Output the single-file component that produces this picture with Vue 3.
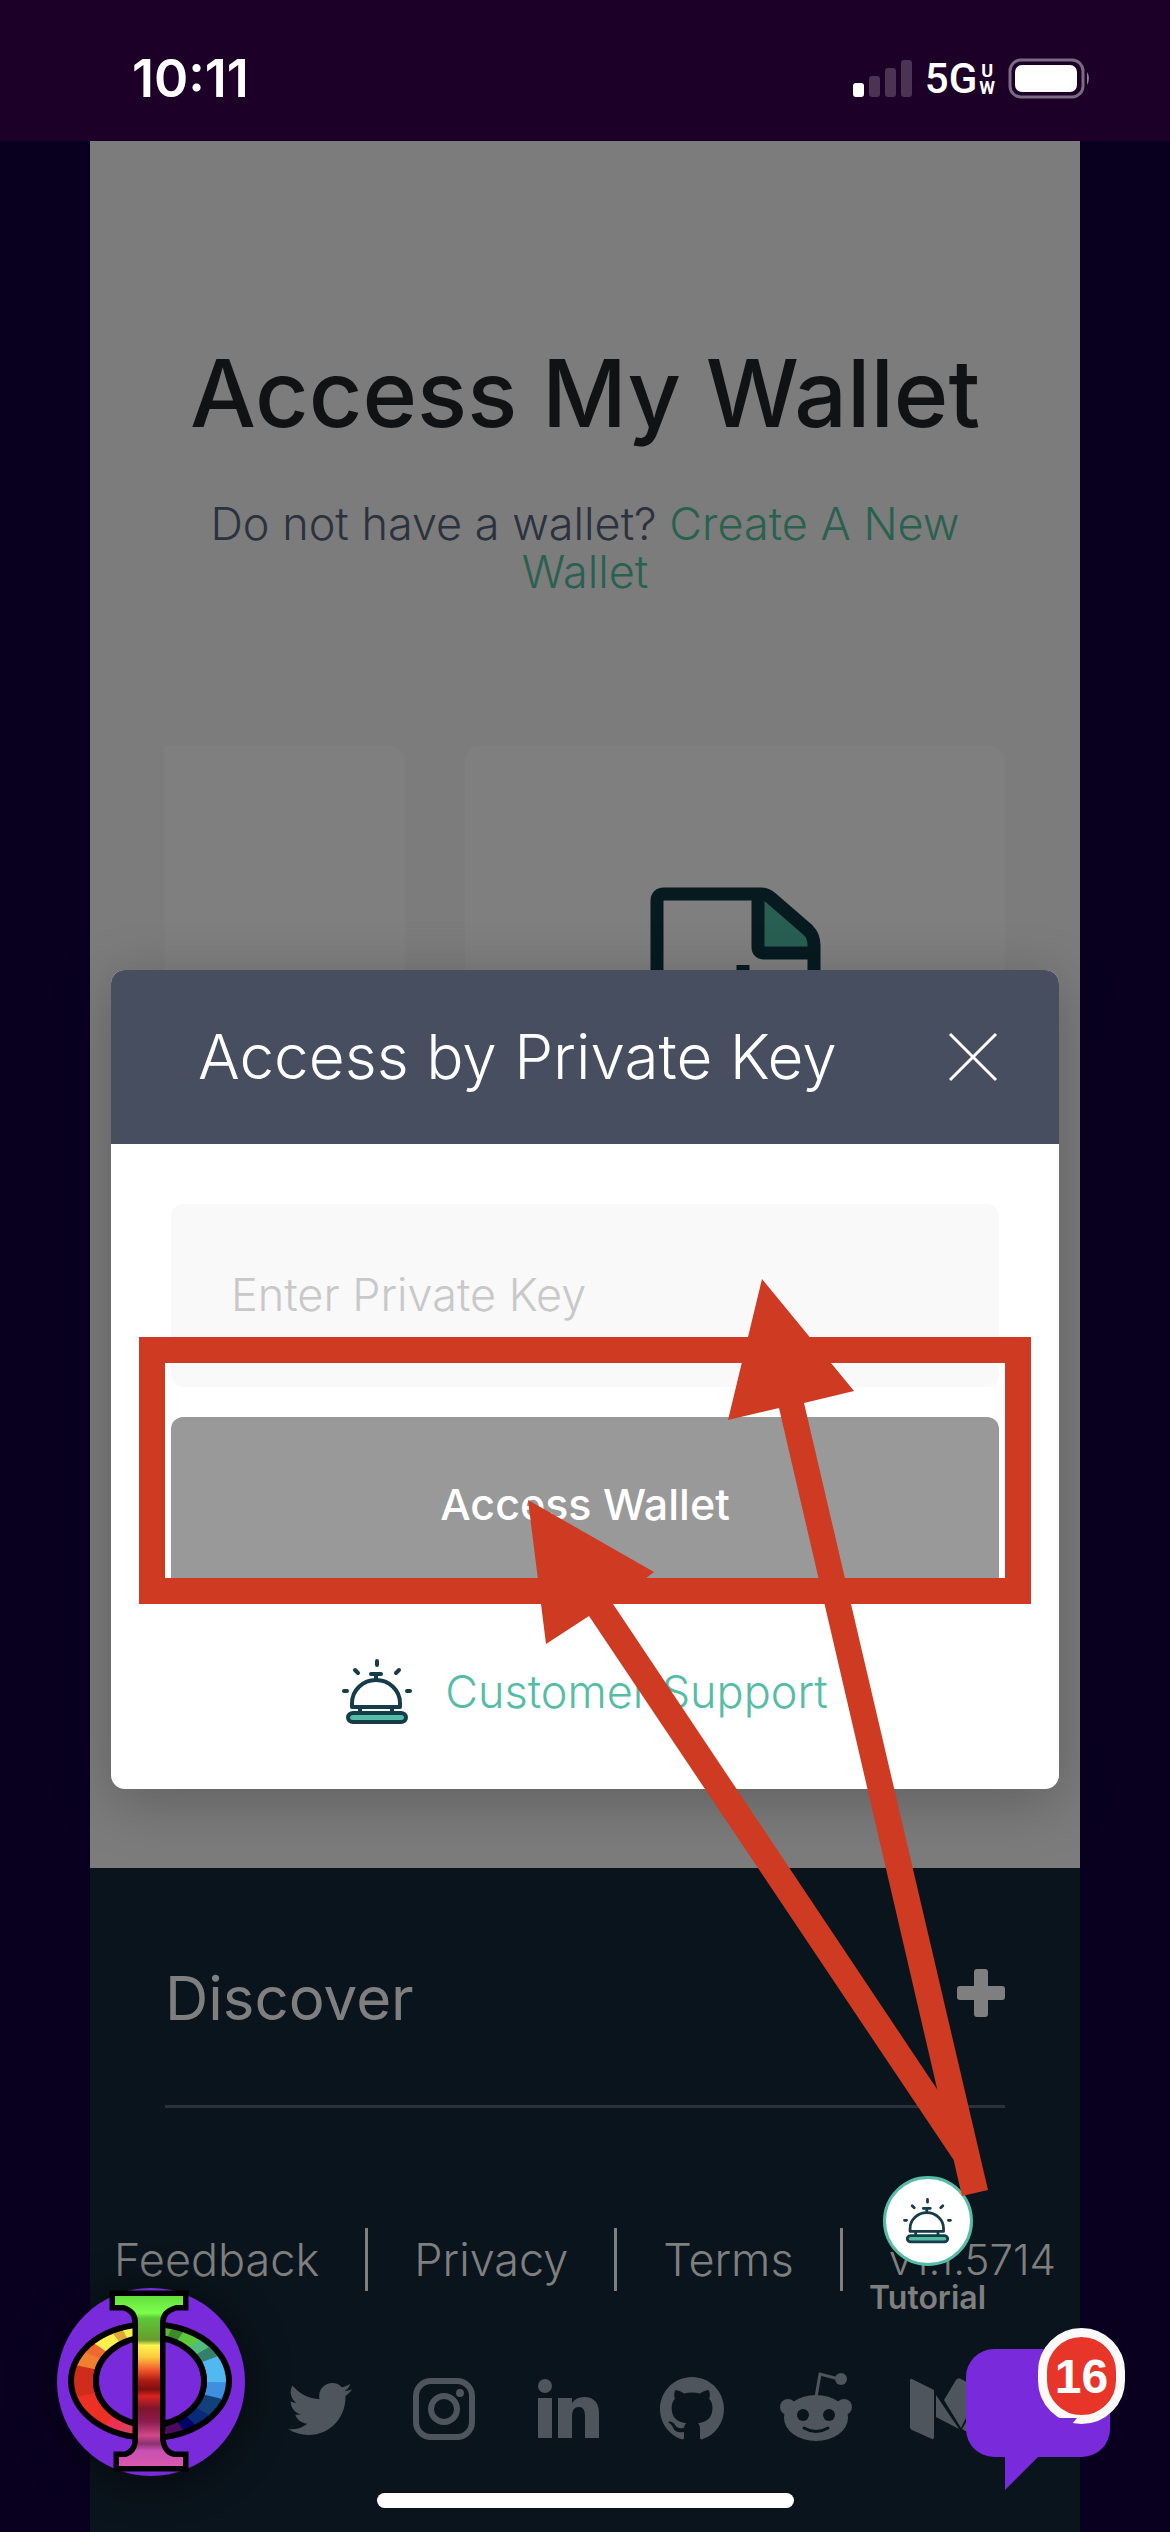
<script setup>
import { ref } from 'vue'

const privateKey = ref('')
const links = ['Feedback', 'Privacy', 'Terms']

const wedgeColors = [
  [0, 14, '#3f8fe0'], [14, 30, '#12407a'], [30, 44, '#082a78'], [44, 56, '#040468'],
  [56, 72, '#4a0a5e'], [72, 90, '#7a2070'], [90, 106, '#f050a0'], [106, 122, '#d8405c'],
  [122, 136, '#ee3050'], [136, 168, '#ec3024'], [168, 192, '#cf2c1c'], [192, 204, '#f08030'],
  [204, 214, '#f06a30'], [214, 232, '#fff050'], [232, 242, '#e0a83a'], [242, 270, '#f8f04c'],
  [270, 292, '#58b832'], [292, 304, '#3f8a2c'], [304, 320, '#5cc83c'], [320, 330, '#50bc80'],
  [330, 340, '#35806c'], [340, 360, '#52b8f0'],
]
const point = (deg) => {
  const a = (deg * Math.PI) / 180
  return `${(94 + 110 * Math.cos(a)).toFixed(1)} ${(94 + 110 * Math.sin(a)).toFixed(1)}`
}
const wedges = wedgeColors.map(([from, to, color]) => ({
  d: `M94 94L${point(from)}L${point(to + 1)}Z`,
  color,
}))
</script>

<template>
  <div class="screen">
    <svg class="defs" aria-hidden="true">
      <symbol id="bell" viewBox="0 0 70 66">
        <g fill="none" stroke="#163c4a" stroke-width="4" stroke-linecap="round">
          <path d="M35 2V6M2 32H5M65 32H68M13 11L16 14M57 11L54 14M29 15H39M34 15V20" />
          <path d="M10 48V44A24 23 0 0 1 58 44V48Z" fill="#fff" stroke-linejoin="round" />
          <path d="M18 50V53M50 50V53" />
          <rect x="6" y="54" width="58" height="9" rx="5" fill="#55bda6" />
        </g>
      </symbol>
    </svg>

    <header class="status">
      <time class="clock">10:11</time>
      <div class="signals">
        <svg width="58" height="38" viewBox="0 0 58 38" fill="#fff">
          <rect y="23" width="11" height="14" rx="3" />
          <g opacity=".2">
            <rect x="16" y="16" width="11" height="21" rx="3" />
            <rect x="32" y="8" width="11" height="29" rx="3" />
            <rect x="48" y="0" width="11" height="37" rx="3" />
          </g>
        </svg>
        <span class="net">5G</span>
        <span class="uw"><span>U</span><span>W</span></span>
        <svg class="battery" width="82" height="39" viewBox="0 0 82 39">
          <rect x="1" y="1" width="73" height="37" rx="11" fill="none" stroke="#fff" stroke-opacity=".42" stroke-width="3" />
          <rect x="6" y="6" width="62" height="27" rx="7" fill="#fff" />
          <path d="M78 13q4 6 0 13z" fill="#fff" opacity=".5" />
        </svg>
      </div>
    </header>

    <div class="page">
      <main>
        <h1>Access My Wallet</h1>
        <p class="lead">Do not have a wallet? <a href="#create">Create A New Wallet</a></p>
        <div class="cards">
          <div class="card first"></div>
          <div class="card">
            <svg width="170" height="210" viewBox="0 0 170 210" fill="none" stroke="#061a20" stroke-width="13" stroke-linejoin="round">
              <path d="M108 8V66H164L160 46L117 8Z" fill="#285f52" stroke="none" />
              <path d="M7 202V14Q7 7 14 7H111Q117 7 121 11L158 43Q164 49 164 58V202Z" />
              <path d="M108 8V60Q108 66 114 66H164M93 78V120" />
            </svg>
          </div>
        </div>
      </main>

      <footer>
        <button class="discover" type="button">
          <span>Discover</span>
          <svg width="48" height="48" viewBox="0 0 48 48" fill="#7f7f7f">
            <rect x="17" width="14" height="48" rx="3" />
            <rect y="17" width="48" height="14" rx="3" />
          </svg>
        </button>
        <nav class="links">
          <a v-for="l in links" :key="l" :href="'#' + l.toLowerCase()">{{ l }}</a>
          <span class="version">v1.1.5714</span>
        </nav>
        <div class="social">
          <a href="#twitter" aria-label="Twitter">
            <svg viewBox="0 0 512 512"><path d="M459.37 151.716c.325 4.548.325 9.097.325 13.645 0 138.72-105.583 298.558-298.558 298.558-59.452 0-114.68-17.219-161.137-47.106 8.447.974 16.568 1.299 25.34 1.299 49.055 0 94.213-16.568 130.274-44.832-46.132-.975-84.792-31.188-98.112-72.772 6.498.974 12.995 1.624 19.818 1.624 9.421 0 18.843-1.3 27.614-3.573-48.081-9.747-84.143-51.98-84.143-102.985v-1.299c13.969 7.797 30.214 12.67 47.431 13.319-28.264-18.843-46.781-51.005-46.781-87.391 0-19.492 5.197-37.36 14.294-52.954 51.655 63.675 129.3 105.258 216.365 109.807-1.624-7.797-2.599-15.918-2.599-24.04 0-57.828 46.782-104.934 104.934-104.934 30.213 0 57.502 12.67 76.67 33.137 23.715-4.548 46.456-13.32 66.599-25.34-7.798 24.366-24.366 44.833-46.132 57.827 21.117-2.273 41.584-8.122 60.426-16.243-14.292 20.791-32.161 39.308-52.628 54.253z" /></svg>
          </a>
          <a href="#instagram" aria-label="Instagram">
            <svg viewBox="0 0 64 64">
              <rect x="4" y="4" width="56" height="56" rx="15" fill="none" stroke="#4e555c" stroke-width="6" />
              <circle cx="32" cy="32" r="13" fill="none" stroke="#4e555c" stroke-width="6" />
              <circle cx="48" cy="16" r="4" />
            </svg>
          </a>
          <a href="#linkedin" aria-label="LinkedIn">
            <svg viewBox="0 0 64 64">
              <circle cx="9" cy="9" r="7" />
              <path d="M2 21H16V61H2zM22 21H36V26Q40 20 48 20Q63 20 63 37V61H49V39Q49 30 43 30Q36 30 36 39V61H22z" />
            </svg>
          </a>
          <a href="#github" aria-label="GitHub">
            <svg viewBox="0 0 16 16"><path d="M8 0C3.58 0 0 3.58 0 8c0 3.54 2.29 6.53 5.47 7.59.4.07.55-.17.55-.38 0-.19-.01-.82-.01-1.49-2.01.37-2.53-.49-2.69-.94-.09-.23-.48-.94-.82-1.13-.28-.15-.68-.52-.01-.53.63-.01 1.08.58 1.23.82.72 1.21 1.87.87 2.33.66.07-.52.28-.87.51-1.07-1.78-.2-3.64-.89-3.64-3.95 0-.87.31-1.59.82-2.15-.08-.2-.36-1.02.08-2.12 0 0 .67-.21 2.2.82.64-.18 1.32-.27 2-.27.68 0 1.36.09 2 .27 1.53-1.04 2.2-.82 2.2-.82.44 1.1.16 1.92.08 2.12.51.56.82 1.27.82 2.15 0 3.07-1.87 3.75-3.65 3.95.29.25.54.73.54 1.48 0 1.07-.01 1.93-.01 2.2 0 .21.15.46.55.38A8.013 8.013 0 0016 8c0-4.42-3.58-8-8-8z" /></svg>
          </a>
          <a href="#reddit" aria-label="Reddit">
            <svg viewBox="4 0 64 64">
              <path d="M36 20L40 -3L59 2" fill="none" stroke="#4e555c" stroke-width="3" />
              <circle cx="61" cy="2" r="6" />
              <circle cx="8" cy="30" r="8" />
              <circle cx="64" cy="30" r="8" />
              <ellipse cx="36" cy="41" rx="32" ry="23" />
              <g fill="#0a141c"><circle cx="23" cy="38" r="6" /><circle cx="49" cy="38" r="6" /></g>
              <path d="M24 51Q36 58 48 51" fill="none" stroke="#0a141c" stroke-width="3" stroke-linecap="round" />
            </svg>
          </a>
          <a href="#medium" aria-label="Medium">
            <svg viewBox="0 0 64 64">
              <path d="M4 2Q2 1 2 4V50Q2 52 4 53L24 62Q26 63 26 60V13zM28 18V40L51 52zM36 23L48 3Q50 0 53 2L72 12L53 51zM54 52L74 18V60Q74 63 71 62z" />
            </svg>
          </a>
        </div>
      </footer>
    </div>

    <section class="modal" role="dialog" aria-labelledby="modal-title">
      <div class="modal-head">
        <h2 id="modal-title">Access by Private Key</h2>
        <button class="close" type="button" aria-label="Close">
          <svg width="48" height="48" viewBox="0 0 48 48" stroke="#fff" stroke-width="3"><path d="M1 1L47 47M47 1L1 47" /></svg>
        </button>
      </div>
      <form class="modal-body" @submit.prevent>
        <input v-model="privateKey" type="text" placeholder="Enter Private Key" aria-label="Enter Private Key" />
        <button class="submit" type="submit">Access Wallet</button>
        <a class="support" href="#support">
          <svg width="70" height="66"><use href="#bell" /></svg>
          <span>Customer Support</span>
        </a>
      </form>
    </section>

    <a class="tutorial" href="#tutorial">
      <span class="disc"><svg width="49" height="46"><use href="#bell" /></svg></span>
      <span>Tutorial</span>
    </a>

    <svg class="marks" viewBox="0 0 1170 2532" preserveAspectRatio="xMidYMin meet" fill="#cf3a22">
      <rect x="152" y="1350" width="866" height="241" fill="none" stroke="#cf3a22" stroke-width="26" />
      <path d="M528 1500L654 1572L613 1604L951 2110L970 2170L953 2159L589 1616L546 1644Z" />
      <path d="M762 1279L854 1391L804 1403L988 2190L962 2196L779 1408L728 1420Z" />
    </svg>

    <button class="avatar" type="button" aria-label="Profile">
      <svg width="190" height="190" viewBox="0 0 190 190">
        <defs>
          <clipPath id="ring"><path clip-rule="evenodd" d="M18 94a76 54 0 1 0 152 0a76 54 0 1 0 -152 0zM37 94a57 46 0 1 0 114 0a57 46 0 1 0 -114 0z" /></clipPath>
          <linearGradient id="stem" x1="0" y1="0" x2="0" y2="1">
            <stop offset="0" stop-color="#62e03c" /><stop offset=".1" stop-color="#7cff4c" />
            <stop offset=".13" stop-color="#5cc838" /><stop offset=".26" stop-color="#6a9a2c" />
            <stop offset=".29" stop-color="#fff44e" /><stop offset=".36" stop-color="#fcc83c" />
            <stop offset=".44" stop-color="#f0502a" /><stop offset=".5" stop-color="#a81a14" />
            <stop offset=".55" stop-color="#801010" /><stop offset=".59" stop-color="#d82420" />
            <stop offset=".66" stop-color="#80142c" /><stop offset=".74" stop-color="#8c1c50" />
            <stop offset=".82" stop-color="#d04888" /><stop offset=".87" stop-color="#8c3070" />
            <stop offset=".91" stop-color="#c850b4" /><stop offset="1" stop-color="#d858ac" />
          </linearGradient>
        </defs>
        <circle cx="95" cy="95" r="94" fill="#792bdc" />
        <ellipse cx="94" cy="94" rx="82" ry="60" fill="#000" />
        <g clip-path="url(#ring)">
          <path v-for="w in wedges" :key="w.d" :d="w.d" :fill="w.color" />
        </g>
        <ellipse cx="94" cy="94" rx="54" ry="44" fill="#792bdc" stroke="#000" stroke-width="6" />
        <path d="M59 9H127V18H120Q104 22 104 36V152Q106 168 118 170H127V179H63V170H70Q82 166 82 152V36Q82 22 68 18H59Z" fill="#000" stroke="#000" stroke-width="11" />
        <path d="M59 9H127V18H120Q104 22 104 36V152Q106 168 118 170H127V179H63V170H70Q82 166 82 152V36Q82 22 68 18H59Z" fill="url(#stem)" />
      </svg>
    </button>

    <button class="chat" type="button" aria-label="Open chat, 16 unread">
      <svg width="144" height="142" viewBox="0 0 144 142" fill="#792bdc">
        <rect width="144" height="108" rx="28" />
        <path d="M39 107V141L73 107z" />
      </svg>
      <span class="badge">16</span>
      <svg class="notch" width="20" height="8" viewBox="0 0 20 8" fill="#792bdc"><path d="M0 2H18L13 8H0z" /></svg>
    </button>
    <div class="home"></div>
  </div>
</template>

<style>
body { margin: 0; background: #090020; }
</style>

<style scoped>
.screen {
  position: relative;
  display: flex;
  flex-direction: column;
  min-height: 100vh;
  overflow: hidden;
  background: #090020;
  font-family: Inter, "Open Sans", sans-serif;
  font-weight: 300;
}
.screen * { box-sizing: border-box; }
.defs { position: absolute; width: 0; height: 0; }
button { border: 0; padding: 0; background: none; font: inherit; cursor: pointer; }
a { color: inherit; text-decoration: none; }
svg { display: block; flex: none; overflow: visible; }

.status {
  display: flex;
  justify-content: space-between;
  align-items: center;
  height: 141px;
  padding: 16px 79px 0 132px;
  background: #1c0028;
  color: #fff;
}
.clock { font-size: 52px; font-weight: 600; line-height: 60px; }
.signals { display: flex; align-items: center; }
.net { margin-left: 14px; font: 500 42px/42px Roboto, sans-serif; }
.uw { display: flex; flex-direction: column; align-items: center; margin: 0 14px 0 2px; font: 700 18px/17px Roboto, sans-serif; }

.page {
  display: flex;
  flex: 1;
  flex-direction: column;
  margin: 0 90px;
  background: #7c7c7c;
}
main { padding: 197px 75px 222px; text-align: center; }
h1 { margin: 0; color: #111214; font-size: 93px; font-weight: 500; line-height: 110px; white-space: nowrap; }
.lead { margin: 52px 0 150px; color: #2b323e; font-size: 45px; line-height: 48px; }
.lead a { color: #29614f; }
.cards { display: flex; gap: 60px; }
.card {
  display: flex;
  flex: 1;
  justify-content: center;
  height: 900px;
  padding-top: 141px;
  border-radius: 14px;
  background: #7f7f7f;
}
.card.first { flex: 0 0 240px; border-radius: 0 14px 14px 0; }

footer { flex: 1; padding-bottom: 90px; background: #0a141c; color: #7f7f7f; }
.discover {
  display: flex;
  justify-content: space-between;
  align-items: center;
  width: calc(100% - 150px);
  height: 240px;
  margin: 0 75px;
  padding: 22px 0 0;
  border-bottom: 3px solid #2a313c;
  color: inherit;
  font-size: 60px;
  font-weight: 400;
}
.discover svg { margin-bottom: 10px; }
.links { display: flex; justify-content: center; margin-top: 120px; font-size: 45px; line-height: 63px; }
.links > * + * { margin-left: 46px; padding-left: 46px; border-left: 3px solid #7f7f7f; }
.links .version { font-size: 42px; }
.social { display: flex; justify-content: space-between; margin-top: 86px; padding: 0 108px 0 198px; }
.social svg { width: 64px; height: 64px; fill: #4e555c; }

.modal {
  position: absolute;
  top: 970px;
  right: 111px;
  left: 111px;
  overflow: hidden;
  border-radius: 14px;
  background: #fff;
  box-shadow: 0 12px 60px rgba(0, 0, 0, .24);
}
.modal-head {
  display: flex;
  justify-content: space-between;
  align-items: center;
  height: 174px;
  padding: 0 62px 0 87px;
  background: #464e5f;
  color: #fff;
}
h2 { margin: 0; font-size: 62px; font-weight: 300; line-height: 72px; white-space: nowrap; }
.modal-body { display: flex; flex-direction: column; padding: 60px 60px 64px; }
input {
  height: 183px;
  padding: 0 60px 2px;
  border: 0;
  border-radius: 12px;
  background: #f9f9f9;
  font: inherit;
  font-size: 45px;
}
input::placeholder { color: #c8c8c8; opacity: 1; }
.submit { height: 183px; margin-top: 30px; padding-bottom: 10px; border-radius: 12px; background: #999; color: #fff; font-size: 43px; font-weight: 500; }
.support { display: flex; align-items: center; justify-content: center; gap: 33px; margin-top: 59px; color: #55bda6; font-size: 45px; line-height: 66px; }

.tutorial {
  position: absolute;
  right: 184px;
  bottom: 216px;
  display: flex;
  flex-direction: column;
  align-items: center;
  gap: 14px;
  color: #7f7f7f;
  font-size: 32px;
  font-weight: 600;
  line-height: 36px;
}
.disc { display: grid; place-items: center; width: 90px; height: 90px; border: 3px solid #55bda6; border-radius: 50%; background: #fff; }
.marks { position: absolute; top: 0; left: 0; width: 100%; pointer-events: none; }
.avatar { position: absolute; bottom: 55px; left: 56px; border-radius: 50%; box-shadow: 0 4px 40px rgba(0, 0, 0, .5); }
.chat { position: absolute; right: 60px; bottom: 41px; }
.badge {
  position: absolute;
  top: -21px;
  right: -15px;
  width: 87px;
  height: 96px;
  border: 9px solid #fafafa;
  border-radius: 44px;
  background: #e73629;
  color: #fff;
  font: bold 48px/80px "Liberation Sans", sans-serif;
}
.notch { position: absolute; top: 67px; left: 93px; }
.home { position: absolute; bottom: 24px; left: 50%; width: 417px; height: 15px; margin-left: -208px; border-radius: 8px; background: #fff; }
</style>
